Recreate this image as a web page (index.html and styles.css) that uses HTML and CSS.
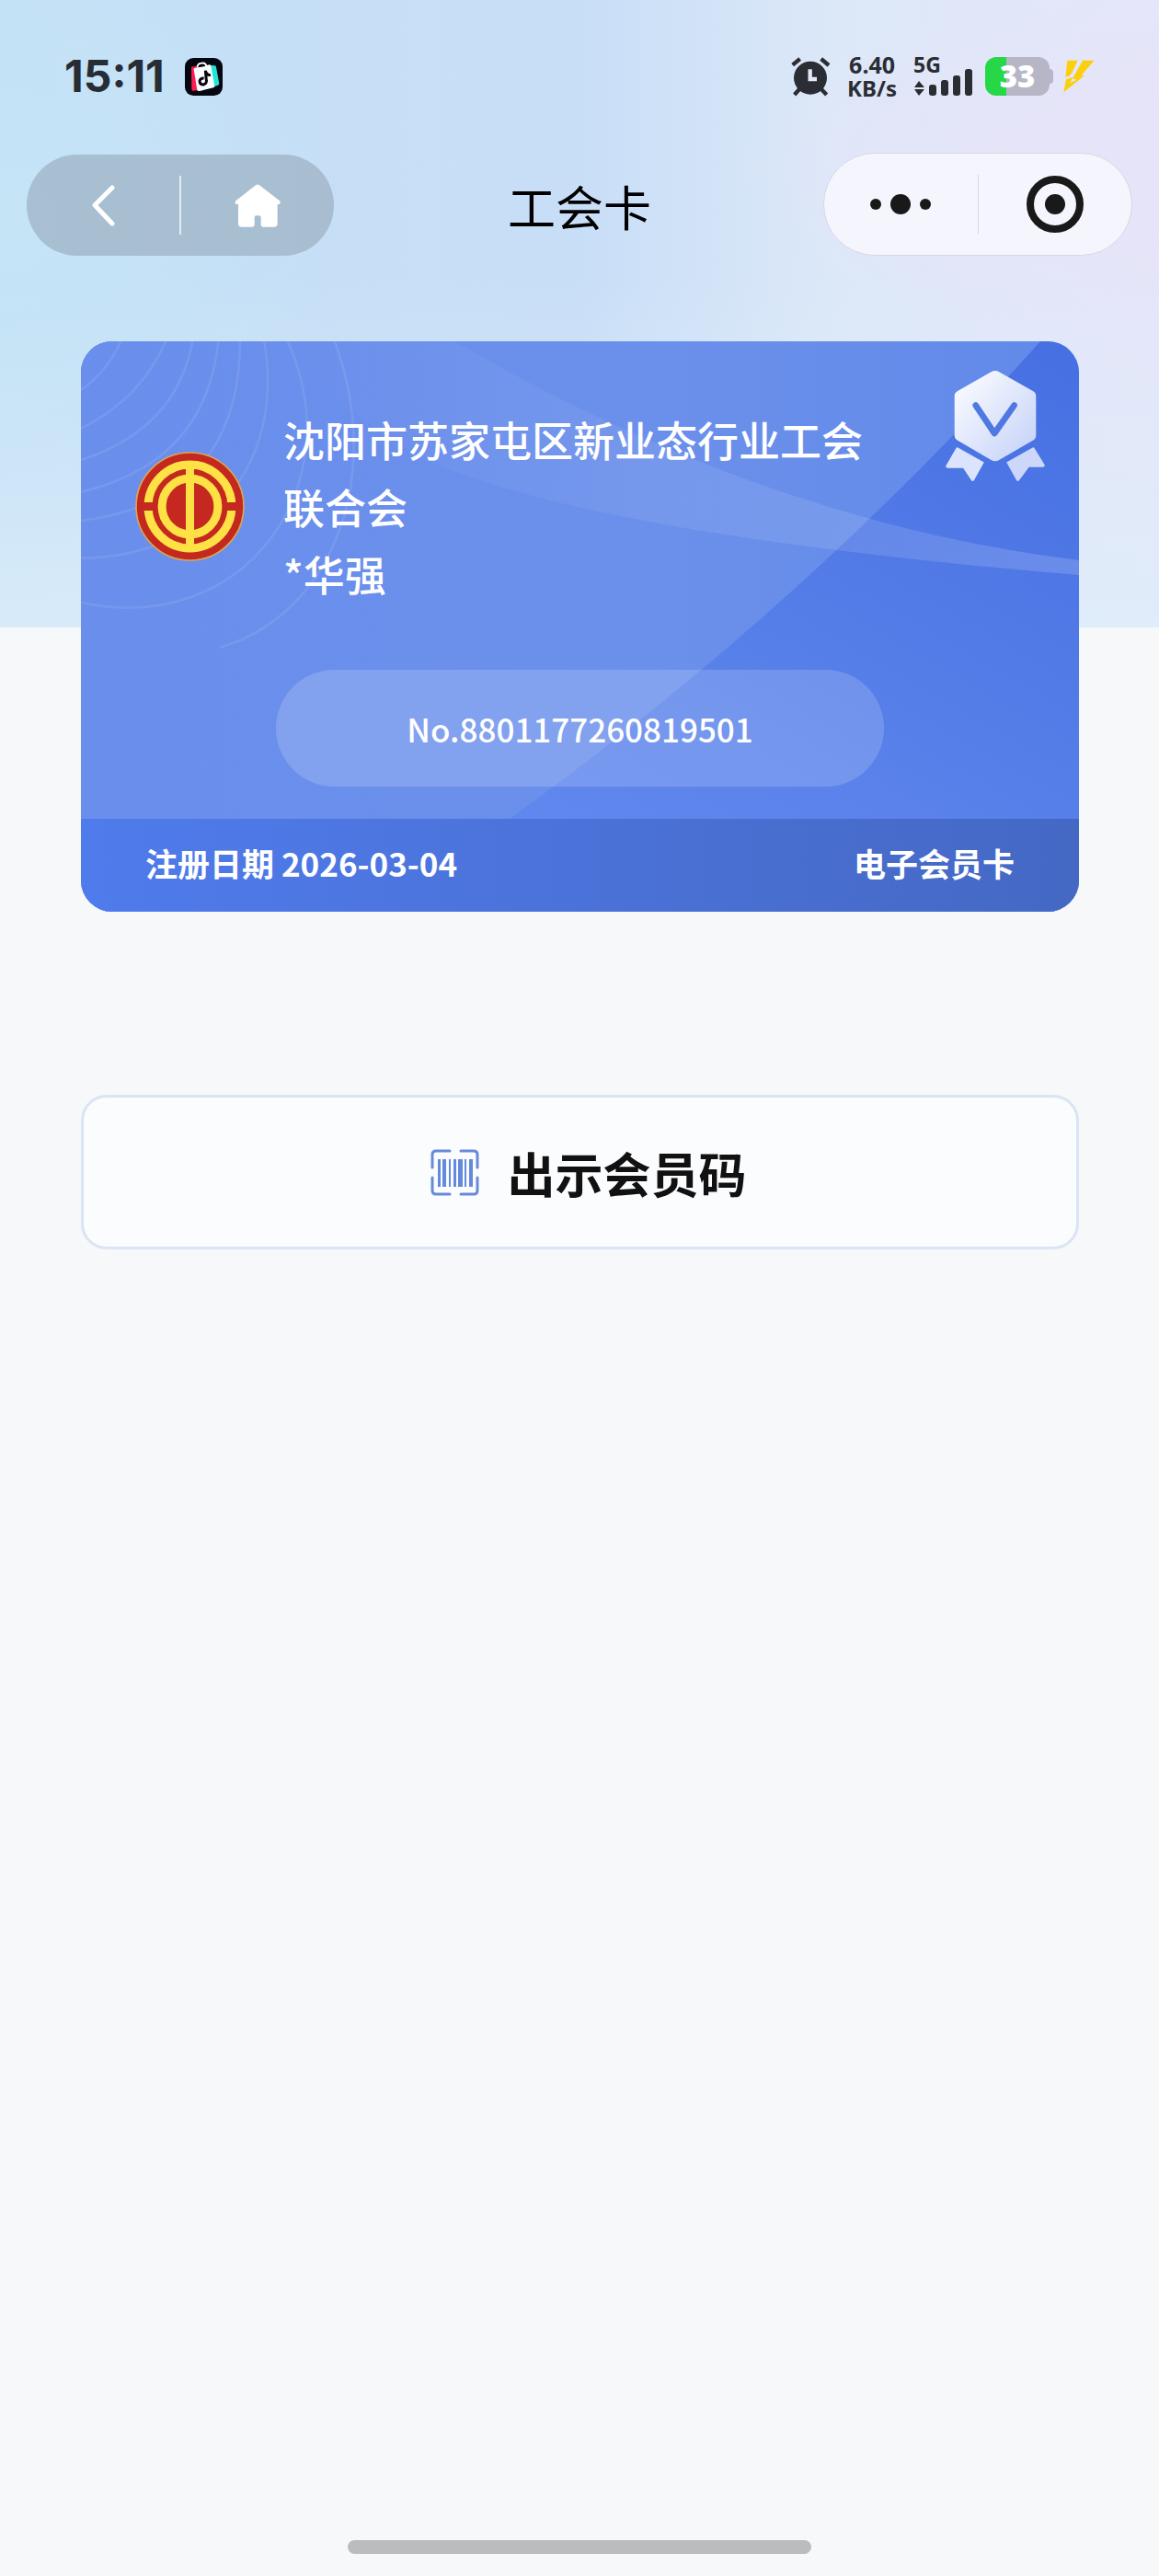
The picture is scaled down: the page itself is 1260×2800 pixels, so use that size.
FILE: index.html
```
<!DOCTYPE html>
<html lang="zh-CN">
<head>
<meta charset="utf-8">
<meta name="viewport" content="width=device-width, initial-scale=1">
<title>工会卡</title>
<link rel="stylesheet" href="styles.css">
</head>
<body>
<div class="page">

  <div class="status-bar">
    <div class="status-left">
      <span class="clock">15:11</span>
      <svg class="app-icon" viewBox="0 0 123 123" aria-hidden="true">
        <rect width="123" height="123" rx="28" fill="#05060f"/>
        <path d="M21 29L38 26L52 104L26 107Q22 107 22 101Z" fill="#fe1d52"/>
        <path d="M84 24L98 25Q101 26 102 30L112 84Q112 88 108 89L48 109L44 103Z" fill="#1fe5dc"/>
        <path d="M32 33L80 22Q84 22 85 26L97 92Q97 96 93 97L45 108Q41 108 40 104L29 37Q29 34 32 33Z" fill="#fff"/>
        <path d="M41 32Q40 18 54 17Q67 15 70 26" fill="none" stroke="#fff" stroke-width="6"/>
        <path d="M43 31Q44 23 55 20Q64 20 67 27Z" fill="#05060f"/>
        <path d="M62 66Q50 65 48 76Q49 87 60 87Q72 85 70 73L67 41M68 45Q72 58 84 55" fill="none" stroke="#05060f" stroke-width="9"/>
      </svg>
    </div>
    <div class="status-right">
      <svg class="alarm" viewBox="0 0 129 129" aria-hidden="true">
        <g stroke="#2a2d33" stroke-width="13">
          <path d="M5 26L29 6M98 6L123 27M27 105L11 123M99 105L116 123"/>
        </g>
        <circle cx="63" cy="68" r="54" fill="#2a2d33"/>
        <path d="M62 40V72H84" fill="none" stroke="#e5e6f7" stroke-width="13"/>
      </svg>
      <div class="speed">
        <span>6.40</span>
        <span class="unit">KB/s</span>
      </div>
      <svg class="signal" viewBox="0 0 66 52" role="img" aria-label="5G">
        <text class="signal-type" x="0" y="22">5G</text>
        <g fill="#2a2d33">
          <path d="M1 38L6 31L12 38ZM1 40L6 47L12 40Z"/>
          <rect x="17" y="35" width="8" height="12" rx="3"/>
          <rect x="30" y="30" width="8" height="17" rx="3"/>
          <rect x="43" y="25" width="8" height="22" rx="3"/>
          <rect x="56" y="18" width="8" height="29" rx="3"/>
        </g>
      </svg>
      <div class="battery"><span>33</span></div>
      <svg class="bolt" viewBox="0 0 105 108" aria-hidden="true">
        <path d="M16 2H50L31 42L21 54H14L10 60ZM66 2H104L62 50H72L54 66L4 106L12 64L36 57L24 76L46 66L34 60Z" fill="#fbcf0d"/>
      </svg>
    </div>
  </div>

  <header class="nav">
    <div class="capsule capsule-dark">
      <button type="button" aria-label="返回">
        <svg width="26" height="45" viewBox="0 0 26 45"><path d="M23 3L4 22L23 42" fill="none" stroke="#fff" stroke-width="5" stroke-linecap="round" stroke-linejoin="round"/></svg>
      </button>
      <button type="button" aria-label="首页">
        <svg width="50" height="47" viewBox="0 0 150 141"><path d="M66 6Q75 -3 84 6L147 55Q152 60 146 66H140V130Q140 140 130 140H94Q86 140 86 132V109Q86 103 80 103H71Q65 103 65 109V132Q65 140 56 140H22Q12 140 12 130V66H5Q-1 61 4 55Z" fill="#fff"/></svg>
      </button>
    </div>
    <h1 class="title">工会卡</h1>
    <div class="capsule capsule-light">
      <button type="button" aria-label="更多">
        <svg width="66" height="22" viewBox="0 0 66 22" fill="#191919"><circle cx="6" cy="11" r="6"/><circle cx="33" cy="11" r="11"/><circle cx="60" cy="11" r="6"/></svg>
      </button>
      <button type="button" aria-label="关闭">
        <svg width="62" height="62" viewBox="0 0 62 62"><circle cx="31" cy="31" r="27" fill="none" stroke="#191919" stroke-width="8"/><circle cx="31" cy="31" r="11" fill="#191919"/></svg>
      </button>
    </div>
  </header>

  <main class="content">
    <section class="card">
      <svg class="card-art" viewBox="0 0 1085 620" preserveAspectRatio="xMidYMid slice" aria-hidden="true">
        <defs>
          <linearGradient id="base" x1="0" y1="1" x2="1" y2="0">
            <stop offset="0" stop-color="#6a90f2"/>
            <stop offset=".5" stop-color="#5a82ea"/>
            <stop offset="1" stop-color="#466fe2"/>
          </linearGradient>
          <linearGradient id="sheet" x1="0" y1="0" x2="1" y2="0">
            <stop offset="0" stop-color="#6a8eec"/>
            <stop offset=".6" stop-color="#6b90eb"/>
            <stop offset="1" stop-color="#628ae9"/>
          </linearGradient>
          <linearGradient id="swoosh" x1="0" y1="0" x2="1" y2="0">
            <stop offset="0" stop-color="#fff" stop-opacity="0"/>
            <stop offset=".4" stop-color="#fff" stop-opacity=".06"/>
            <stop offset="1" stop-color="#fff" stop-opacity=".16"/>
          </linearGradient>
        </defs>
        <rect width="1085" height="620" fill="url(#base)"/>
        <path d="M0 0H1043Q784 290 466 519H0Z" fill="url(#sheet)"/>
        <path d="M220 0H406Q740 195 1085 238V254Q560 210 378 130Q270 70 220 0Z" fill="url(#swoosh)"/>
        <g transform="scale(.3333) translate(-24 -33)" fill="none" stroke="#fff" stroke-opacity=".09" stroke-width="8">
          <path d="M155 33Q110 130 24 192"/>
          <path d="M300 33Q220 220 24 318"/>
          <path d="M388 33Q335 320 24 420"/>
          <path d="M472 33Q430 430 24 524"/>
          <path d="M543 33Q540 555 24 618"/>
          <path d="M622 33C690 440 440 735 24 740"/>
          <path d="M698 33C910 500 560 1000 24 885"/>
          <path d="M852 33C1020 500 830 930 475 1032"/>
        </g>
      </svg>

      <svg class="medal" viewBox="0 0 335 370" aria-hidden="true">
        <defs>
          <linearGradient id="silver" x1="0" y1="0" x2="1" y2="1">
            <stop offset=".1" stop-color="#f8faff"/>
            <stop offset="1" stop-color="#c3d0f8"/>
          </linearGradient>
        </defs>
        <path d="M154 9Q167 2 180 9L291 72Q300 77 300 88V215Q300 226 291 231L180 296Q167 303 154 296L44 231Q35 226 35 215V88Q35 77 44 72Z" fill="url(#silver)"/>
        <path d="M104 118L165 209L229 118" fill="none" stroke="#4f78e2" stroke-width="20" stroke-linecap="round" stroke-linejoin="round"/>
        <path d="M46 255L131 303L99 361Q94 368 89 361L63 322H12Q4 319 8 313L39 259Q42 254 46 255Z" fill="#dbe4fc"/>
        <path d="M289 255L204 303L236 361Q241 368 246 361L277 319H323Q331 316 327 310L296 259Q293 254 289 255Z" fill="#ccd7fa"/>
      </svg>

      <div class="card-head">
        <svg class="emblem" viewBox="0 0 356 356" aria-hidden="true">
          <circle cx="178" cy="178" r="175" fill="#c4281f" stroke="#dba552" stroke-width="5"/>
          <g fill="none" stroke="#fde145" stroke-width="27">
            <circle cx="178" cy="178" r="136"/>
            <circle cx="178" cy="178" r="91"/>
            <path d="M178 42V314"/>
          </g>
          <path d="M20 178H60M296 178H336" stroke="#c4281f" stroke-width="27"/>
        </svg>
        <div class="holder">
          <p>沈阳市苏家屯区新业态行业工会联合会</p>
          <p>*华强</p>
        </div>
      </div>
      <div class="card-no">No.8801177260819501</div>
      <div class="card-foot">
        <span>注册日期 2026-03-04</span>
        <span>电子会员卡</span>
      </div>
    </section>

    <button class="show-code" type="button">
      <svg width="72" height="72" viewBox="0 0 72 72" aria-hidden="true">
        <g fill="none" stroke="#678ad9" stroke-width="3" stroke-linecap="round">
          <path d="M11 30V16Q11 12 15 12H30M42 12H56Q60 12 60 16V30M60 41V55Q60 59 56 59H42M30 59H15Q11 59 11 55V41"/>
        </g>
        <path d="M17 21h3v30h-3zM22 21h4v30h-4zM29 21h2v30h-2zM34 21h3v30h-3zM39 21h5v30h-5zM46 21h2v30h-2zM51 21h4v30h-4z" fill="#6589dc"/>
      </svg>
      <span>出示会员码</span>
    </button>
  </main>

  <div class="home-bar"></div>
</div>
</body>
</html>
```
FILE: styles.css
```
* { box-sizing: border-box; }
body {
  margin: 0;
  background: #f6f8fa;
  color: #111;
  font-family: "Noto Sans CJK SC", "Noto Sans", sans-serif;
}
h1, p { margin: 0; }
button { font-family: inherit; cursor: pointer; }
svg { display: block; flex: none; }

.page {
  display: flex;
  flex-direction: column;
  min-height: 100vh;
  padding-bottom: 24px;
  background:
    radial-gradient(circle at 0 240px, rgba(198,230,246,.7), transparent 360px),
    radial-gradient(ellipse at 100% 180px, #e6e4f8, rgba(230,228,248,.9) 160px, transparent 460px),
    linear-gradient(rgba(222,238,250,0) 300px, rgba(222,238,250,.75) 682px),
    linear-gradient(90deg, #c3e0f6, #c8def7 50%, #dce8f8 72%, #e5e6f9);
  background-size: 100% 682px;
  background-repeat: no-repeat;
}

/* status bar */
.status-bar {
  display: flex;
  align-items: center;
  justify-content: space-between;
  height: 166px;
  padding: 0 70px;
}
.status-left, .status-right { display: flex; align-items: center; }
.status-left { gap: 22px; }
.clock {
  font-family: Inter, sans-serif;
  font-size: 48px;
  font-weight: 700;
  line-height: 48px;
  color: #262d34;
}
.app-icon { width: 41px; height: 41px; }
.alarm { width: 43px; height: 43px; }
.speed {
  display: flex;
  flex-direction: column;
  align-items: center;
  margin: 0 18px;
  font-family: "Noto Sans", sans-serif;
  font-size: 25px;
  font-weight: 700;
  line-height: 25px;
  color: #2a2d33;
}
.speed .unit { font-size: 24px; }
.signal { width: 66px; height: 52px; overflow: visible; }
.signal-type {
  font-family: "Noto Sans", sans-serif;
  font-size: 23px;
  font-weight: 700;
  fill: #2a2d33;
}
.battery {
  position: relative;
  width: 70px;
  height: 42px;
  margin: 0 14px 0 12px;
  border-radius: 12px;
  background: linear-gradient(90deg, #26d845 33%, #b6b6c7 33%);
  color: #fff;
  font-family: "Noto Sans", sans-serif;
  font-size: 33px;
  font-weight: 900;
  line-height: 42px;
  text-align: center;
}
.battery::after {
  content: "";
  position: absolute;
  left: 100%;
  top: 13px;
  width: 4px;
  height: 16px;
  border-radius: 0 4px 4px 0;
  background: #b6b6c7;
}
.bolt { width: 35px; height: 36px; }

/* title bar */
.nav {
  display: grid;
  grid-template-columns: 1fr auto 1fr;
  align-items: end;
  padding: 0 29px;
}
.title { padding-bottom: 22px; font-size: 52px; font-weight: 400; line-height: 64px; color: #000; }
.capsule { display: flex; width: 334px; height: 110px; border-radius: 55px; }
.capsule button {
  display: flex;
  flex: 1;
  align-items: center;
  justify-content: center;
  padding: 0;
  border: 0;
  background: none;
}
.capsule::before { content: ""; order: 1; align-self: center; width: 2px; height: 64px; }
.capsule button:last-child { order: 2; }
.capsule-dark { background: rgba(140,155,172,.5); }
.capsule-dark::before { background: #e3edf5; }
.capsule-light {
  justify-self: end;
  width: 336px;
  height: 112px;
  border: 1px solid #d6d8e6;
  border-radius: 56px;
  background: #f5f6fd;
}
.capsule-light::before { width: 1px; background: #d3d5e0; }

/* card */
.content { padding: 93px 87px 0 88px; }
.card {
  position: relative;
  display: flex;
  flex-direction: column;
  overflow: hidden;
  border-radius: 34px;
  background: #6a8eec;
  color: #fff;
}
.card-art { position: absolute; inset: 0; width: 100%; height: 100%; }
.medal { position: absolute; top: 30px; right: 35px; width: 112px; height: 124px; }
.card-head {
  position: relative;
  display: flex;
  align-items: center;
  gap: 42px;
  padding: 70px 60px 68px 59px;
}
.emblem { width: 119px; height: 119px; }
.holder { max-width: 14em; font-size: 45px; font-weight: 500; line-height: 73px; }
.card-no {
  position: relative;
  align-self: center;
  width: 61%;
  margin-bottom: 35px;
  border-radius: 64px;
  background: rgba(255,255,255,.16);
  font-size: 35px;
  font-weight: 500;
  line-height: 127px;
  text-align: center;
}
.card-foot {
  position: relative;
  display: flex;
  justify-content: space-between;
  padding: 0 70px 6px;
  background: linear-gradient(90deg, #4f7bec, #4b72d8 50%, #4468c4);
  font-size: 35px;
  font-weight: 700;
  line-height: 95px;
}

.show-code {
  display: flex;
  align-items: center;
  justify-content: center;
  gap: 20px;
  width: 100%;
  margin-top: 199px;
  padding: 46px 0 44px 10px;
  border: 3px solid #dae4f3;
  border-radius: 28px;
  background: #fbfcfe;
  color: #111;
  font-size: 52px;
  font-weight: 700;
  line-height: 72px;
}

.home-bar {
  width: 40%;
  height: 15px;
  margin: auto auto 0;
  border-radius: 8px;
  background: #bbbcbe;
}
```
